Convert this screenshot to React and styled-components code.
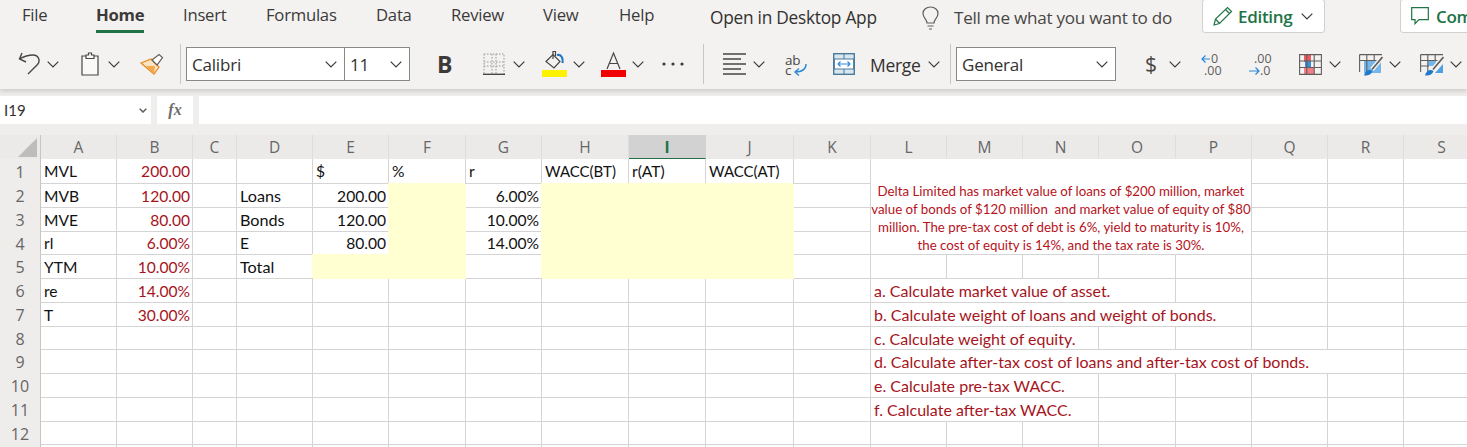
import React from 'react';
import styled, { createGlobalStyle } from 'styled-components';

const Global = createGlobalStyle`
  html, body { margin: 0; padding: 0; background: #fff; }
  #root { width: 1467px; height: 447px; overflow: hidden; }
`;
const UI = `"Open Sans", "Noto Sans", sans-serif`;
const SHEET = `Lato, "Open Sans", sans-serif`;

const Page = styled.div`
  width: 1467px; height: 447px; overflow: hidden; background: #efeeed;
  display: flex; flex-direction: column; font-family: ${UI};
`;
const Ribbon = styled.header`
  height: 89px; flex: none; background: #f3f2f1; position: relative; z-index: 1;
  box-shadow: 0 2px 5px rgba(0,0,0,.16);
`;
const TabRow = styled.nav`
  height: 44px; display: flex; align-items: flex-start; padding-left: 22px; white-space: nowrap;
`;
const Tab = styled.div`
  width: ${p => p.$w}px; margin-right: ${p => p.$gap ?? 40}px; height: 33px; box-sizing: border-box; flex: none;
  padding-top: 2px; font-size: 16.7px; line-height: 26px; letter-spacing: -.25px;
  color: #3b3a39; font-weight: ${p => p.$active ? 700 : 400};
  border-bottom: 3px solid ${p => p.$active ? '#217346' : 'transparent'};
`;
const WideLabel = styled.div`
  margin-left: ${p => p.$ml}px; width: ${p => p.$w}px; padding-top: 5px; flex: none;
  font-size: 17.3px; line-height: 26px; letter-spacing: -.25px; color: #323130;
`;
const HelpLabel = styled(WideLabel)`color: #484644; font-size: 17.1px;`;
const PillButton = styled.div`
  margin-left: ${p => p.$ml}px; margin-top: -1px; height: 34px; width: ${p => p.$w}px; flex: none;
  box-sizing: border-box; background: #fff; border: 1px solid #d2d0ce; border-radius: 3px;
  display: flex; align-items: center; gap: ${p => p.$gap}px; padding-left: 10px;
  color: #217346; font-weight: 600; font-size: 17px; letter-spacing: -.3px;
  svg { flex: none; }
`;
const BulbSlot = styled.div`margin-left: ${p => p.$ml}px; padding-top: 6px; height: 24px; flex: none;`;
const Tools = styled.div`
  height: 40px; display: flex; align-items: center;
`;
const Slot = styled.div`
  margin-left: ${p => p.$ml}px; width: ${p => p.$w}px; flex: none;
  display: flex; align-items: center; justify-content: center; height: 28px;
`;
const Divider = styled.div`
  margin-left: ${p => p.$ml}px; width: 1px; height: 40px; background: #c8c6c4; flex: none;
`;
const Combo = styled.div`
  margin-left: ${p => p.$ml}px; width: ${p => p.$w}px; height: 34px; box-sizing: border-box; flex: none;
  background: #fff; border: 1px solid #8a8886; ${p => p.$joined ? 'border-left: 0;' : ''}
  display: flex; align-items: center; justify-content: space-between;
  padding: 0 7px 0 ${p => p.$pad}px; font-size: 17px; color: #323130; letter-spacing: -.2px;
`;
const MergeText = styled.div`
  margin-left: 15px; width: 50px; flex: none; font-size: 17.5px; color: #323130; letter-spacing: -.3px; padding-top: 2px;
`;
const BoldMark = styled.div`
  margin-left: 27px; width: 15px; flex: none; font-size: 23px; font-weight: 700; color: #3b3a39; line-height: 28px; text-align: center;
`;
const Dollar = styled.div`
  margin-left: 29px; width: 11px; flex: none; font-size: 21px; color: #484644; line-height: 28px; text-align: center;
`;
const FormulaBand = styled.div`
  height: 46px; flex: none; box-sizing: border-box; padding-top: 7px; display: flex; align-items: flex-start;
`;
const NameBox = styled.div`
  width: 151px; height: 28px; background: #fff; display: flex; align-items: center; justify-content: space-between;
  padding: 0 4px; box-sizing: border-box; font-family: ${SHEET}; font-size: 15px; color: #323130;
`;
const FxBox = styled.div`
  margin-left: 6px; width: 36px; height: 28px; background: #fff; display: flex; align-items: center; justify-content: center;
  font-family: "Liberation Serif", serif; font-style: italic; font-weight: 700; color: #6e6d6b; font-size: 16px;
`;
const FormulaInput = styled.div`margin-left: 6px; flex: 1; height: 28px; background: #fff;`;

const Sheet = styled.section`
  display: grid; flex: none; width: 1480px;
  grid-template-columns: 41px 76px 76px 44px 76px 76px 77px 76px 87px 77px 88px 77px 76px 76px 76px 77px 76px 76px 76px 76px;
  grid-template-rows: 24px 25px 24px 24px 23px 24px 24px 24px 23px 24px 24px 24px 23px 24px;
  font-family: ${SHEET}; background: #fff;
`;
const Corner = styled.div`
  background: #ebeae9; border-right: 1px solid #c6c6c6; box-sizing: border-box; display: flex; align-items: center; justify-content: flex-end; padding-right: 3px;
`;
const ColHead = styled.div`
  box-sizing: border-box; background: ${p => p.$active ? '#d2d2d2' : '#ebeae9'};
  border-right: 1px solid ${p => p.$active ? '#d2d2d2' : '#dedddc'};
  border-bottom: 1px solid ${p => p.$active ? '#217346' : '#ebeae9'};
  box-shadow: ${p => p.$active ? '0 1px 0 #217346' : 'none'};
  display: flex; align-items: center; justify-content: center;
  font-family: ${UI}; font-size: 15.5px; color: ${p => p.$active ? '#217346' : '#666'}; font-weight: ${p => p.$active ? 700 : 400};
`;
const RowHead = styled.div`
  box-sizing: border-box; background: #eeedec; border-right: 1px solid #c6c6c6;
  display: flex; align-items: center; justify-content: center;
  font-family: ${UI}; font-size: 16px; color: #666;
`;
const Cell = styled.div`
  box-sizing: border-box; grid-column: span ${p => p.$span || 1};
  border-right: 1px solid ${p => p.$fill || '#d4d4d4'}; border-bottom: 1px solid ${p => p.$fill || '#d4d4d4'};
  background: ${p => p.$fill || '#fff'};
  box-shadow: ${p => p.$fill ? `-1px -1px 0 ${p.$fill}` : 'none'};
  display: flex; align-items: center; justify-content: ${p => p.$right ? 'flex-end' : 'flex-start'};
  padding: 0 2px 0 3px; font-size: ${p => p.$size || 15.6}px; color: ${p => p.$red ? '#a6141c' : '#111'}; white-space: nowrap;
`;
const Note = styled.div`
  box-sizing: border-box; grid-column: span 5; grid-row: span 4;
  border-right: 1px solid #d4d4d4; border-bottom: 1px solid #d4d4d4; background: #fff;
  display: flex; align-items: flex-end; justify-content: center; text-align: center;
  color: #b5121b; font-size: 13.3px; line-height: 18px; white-space: pre;
`;

const Chev = () => (
  <svg width="12" height="7" viewBox="0 0 12 7"><path d="M.7.7 6 6 11.3.7" fill="none" stroke="#3b3a39" strokeWidth="1.2" /></svg>
);
const ChevSlot = ({ ml }) => <Slot $ml={ml} $w={12}><Chev /></Slot>;
const S = ({ w, h, children }) => <svg width={w} height={h} viewBox={`0 0 ${w} ${h}`} fill="none">{children}</svg>;

const Undo = () => (
  <S w={22} h={24}><path d="M10 22 19.500 12.500C22.500 9 21 3 15 3 11 3 5 5 1.500 7M4 1 1.500 7 8 10" stroke="#484644" strokeWidth="1.4" /></S>
);
const Clip = () => (
  <S w={18} h={24}><path d="M5 4H1v19h16V4h-4" fill="#faf9f8" stroke="#484644" strokeWidth="1.2" /><path d="M5 6.500V3h2.500V1h3v2H13v3.500z" fill="#faf9f8" stroke="#484644" strokeWidth="1.2" /></S>
);
const Painter = () => (
  <S w={24} h={22}>
    <path d="M1 10 11 6 19 14 14 21z" fill="#fbe3c2" stroke="#e8871e" strokeWidth="1.2" />
    <path d="M6 13 15 13 14 21z" fill="#f3a94f" />
    <path d="M12 7 19 1.500 22.500 4.500 17 12z" fill="#fff" stroke="#605e5c" strokeWidth="1.2" />
  </S>
);
const BordersIcon = () => (
  <S w={22} h={22}>
    <path d="M1 1h20v20M1 1v20M9 1v20M13 1v20M1 9h20M1 13h20" stroke="#9a9896" strokeWidth="1" strokeDasharray="1.5 1.5" />
    <path d="M0 21.300h22" stroke="#484644" strokeWidth="1.4" />
  </S>
);
const FillIcon = () => (
  <S w={25} h={28}>
    <path d="M4 11.500 11 4.500 18 11.500 12 18z" stroke="#484644" strokeWidth="1.2" />
    <path d="M11 9V1.500h2.500V6" stroke="#484644" strokeWidth="1.2" />
    <path d="M15 5C19 4 21.500 8 20.500 13" stroke="#1f78c8" strokeWidth="2.200" />
    <rect x="0" y="20" width="25" height="7" fill="#fff200" />
  </S>
);
const FontColor = () => (
  <S w={25} h={28}>
    <path d="M6 19 12.500 3 19 19M8.500 13.500h8" stroke="#484644" strokeWidth="1.2" />
    <rect x="0" y="20" width="25" height="7" fill="#f00000" />
  </S>
);
const Dots = () => (
  <S w={22} h={4}><circle cx="2" cy="2" r="1.6" fill="#3b3a39" /><circle cx="11" cy="2" r="1.6" fill="#3b3a39" /><circle cx="20" cy="2" r="1.6" fill="#3b3a39" /></S>
);
const Align = () => (
  <S w={23} h={22}><path d="M0 1h23M0 6h18M0 11h23M0 16h18M0 21h23" stroke="#484644" strokeWidth="1.3" /></S>
);
const Wrap = () => (
  <svg width="22" height="24" viewBox="0 0 22 24" fill="none">
    <text x="0" y="12.500" fontFamily="Open Sans" fontSize="13.500" letterSpacing="-.3" fill="#484644">ab</text>
    <text x="0" y="22.500" fontFamily="Open Sans" fontSize="13.500" fill="#484644">c</text>
    <path d="M21 12C21 18 17 20 10 20M14 16.500 10 20 14 23.500" stroke="#2b88d8" strokeWidth="1.4" />
  </svg>
);
const MergeIcon = () => (
  <S w={22} h={22}>
    <rect x=".7" y=".7" width="20.600" height="20.600" fill="#dbe7f0" stroke="#4a7a9c" strokeWidth="1.4" />
    <rect x="1.400" y="6" width="19.200" height="10" fill="#fff" stroke="#4a7a9c" strokeWidth="1" />
    <path d="M11 1v5M11 16v5" stroke="#4a7a9c" />
    <path d="M5 11h12M7.500 8.500 5 11l2.500 2.500M14.500 8.500 17 11l-2.500 2.500" stroke="#2b88d8" strokeWidth="1.1" />
  </S>
);
const Deci = ({ more }) => (
  <svg width="24" height="24" viewBox="0 0 24 24" fill="none">
    {more ? <>
      <path d="M9 7H1M4.500 3.500 1 7l3.500 3.500" stroke="#2b88d8" strokeWidth="1.2" />
      <text x="10" y="11" fontFamily="Open Sans" fontSize="12.500" fill="#605e5c">0</text>
      <text x="3" y="23" fontFamily="Open Sans" fontSize="12.500" fill="#605e5c">.00</text>
    </> : <>
      <text x="5" y="11" fontFamily="Open Sans" fontSize="12.500" fill="#605e5c">.00</text>
      <path d="M0 19h10M6.500 15.500 10 19l-3.500 3.500" stroke="#2b88d8" strokeWidth="1.2" />
      <text x="11" y="23" fontFamily="Open Sans" fontSize="12.500" fill="#605e5c">.0</text>
    </>}
  </svg>
);
const CondFormat = () => (
  <S w={23} h={21}>
    <rect x="5" y="0" width="7" height="8" fill="#ee5a62" />
    <rect x="6" y="7" width="6" height="6.500" fill="#3b8fd6" />
    <rect x="5" y="13.500" width="10" height="7" fill="#f47e85" />
    <path d="M.6.6h21.800v19.800H.6zM.6 7h21.800M.6 13.500h21.800M7.800.6v19.800M15.200.6v19.800" stroke="#605e5c" strokeWidth="1.100" />
  </S>
);
const Brush = ({ x }) => (
  <g transform={`translate(${x} 0)`}>
    <path d="M18 5.500 8 17.500" stroke="#f3f2f1" strokeWidth="4.500" />
    <path d="M18.500 5 8 17.500" stroke="#605e5c" strokeWidth="1.700" />
    <path d="M0 23.500C1 18.500 5.500 16.500 8.500 19 7.500 22.500 4 24 0 23.500z" fill="#1f78c8" />
  </g>
);
const TableStyle = () => (
  <S w={24} h={24}>
    <rect x="5" y="8" width="17" height="13" fill="#74b6ec" />
    <path d="M.6 2.600H23M.6 2.600V20M.6 8.500H23M7.800 2.600V20M15.200 2.600V9" stroke="#605e5c" strokeWidth="1.100" />
    <Brush x={5} />
  </S>
);
const CellStyle = () => (
  <S w={24} h={24}>
    <rect x="8" y="8" width="8" height="6" fill="#74b6ec" />
    <path d="M23 21V12L15 21z" fill="#4e9fe3" />
    <path d="M.6 2.600H23M.6 2.600V20M.6 8.500H23M.6 14H9M7.800 2.600V20M15.200 2.600V9" stroke="#605e5c" strokeWidth="1.100" />
    <Brush x={5} />
  </S>
);
const Bulb = () => (
  <S w={17} h={24}><path d="M5 17C5 13 1 12 1 7.500 1 3.500 4.500 1 8.500 1S16 3.500 16 7.500C16 12 12 13 12 17zM5.500 20h6M7 23h3" stroke="#605e5c" strokeWidth="1.200" /></S>
);
const Pencil = () => (
  <S w={20} h={20}><path d="M1 19 2.500 13 14.500 1.500 18.500 5.500 6.500 17.500zM2.500 13 6.500 17.500M12.500 3.500 16.500 7.500" stroke="#217346" strokeWidth="1.200" /></S>
);
const Bubble = () => (
  <S w={18} h={18}><path d="M.7.7h16.600v12H8l-4 4v-4H.7z" stroke="#217346" strokeWidth="1.200" /></S>
);
const Triangle = () => (
  <svg width="19" height="19" viewBox="0 0 19 19"><path d="M19 0v19H0z" fill="#bdbdbd" /></svg>
);

const COLS = 'ABCDEFGHIJKLMNOPQRS'.split('');
const cells = {
  A1: { t: 'MVL' }, A2: { t: 'MVB' }, A3: { t: 'MVE' }, A4: { t: 'rl' }, A5: { t: 'YTM' }, A6: { t: 're' }, A7: { t: 'T' },
  B1: { t: '200.00', r: 1, red: 1 }, B2: { t: '120.00', r: 1, red: 1 }, B3: { t: '80.00', r: 1, red: 1 }, B4: { t: '6.00%', r: 1, red: 1 },
  B5: { t: '10.00%', r: 1, red: 1 }, B6: { t: '14.00%', r: 1, red: 1 }, B7: { t: '30.00%', r: 1, red: 1 },
  D2: { t: 'Loans', size: 16.2 }, D3: { t: 'Bonds', size: 16.2 }, D4: { t: 'E' }, D5: { t: 'Total', size: 16.2 },
  E1: { t: '$' }, E2: { t: '200.00', r: 1 }, E3: { t: '120.00', r: 1 }, E4: { t: '80.00', r: 1 },
  F1: { t: '%' }, G1: { t: 'r' }, G2: { t: '6.00%', r: 1 }, G3: { t: '10.00%', r: 1 }, G4: { t: '14.00%', r: 1 },
  H1: { t: 'WACC(BT)', size: 15 }, I1: { t: 'r(AT)' }, J1: { t: 'WACC(AT)', size: 15 },
  L6: { t: 'a. Calculate market value of asset.', span: 4, red: 1, size: 16 },
  L7: { t: 'b. Calculate weight of loans and weight of bonds.', span: 5, red: 1, size: 16 },
  L8: { t: 'c. Calculate weight of equity.', span: 3, red: 1, size: 16 },
  L9: { t: 'd. Calculate after-tax cost of loans and after-tax cost of bonds.', span: 7, red: 1, size: 16 },
  L10: { t: 'e. Calculate pre-tax WACC.', span: 3, red: 1, size: 16 },
  L11: { t: 'f. Calculate after-tax WACC.', span: 3, red: 1, size: 16 },
};
const YELLOW = '#ffffd1';
const yellow = new Set(['E5', 'F2', 'F3', 'F4', 'F5', 'H2', 'H3', 'H4', 'H5', 'I2', 'I3', 'I4', 'I5', 'J2', 'J3', 'J4', 'J5']);
const NOTE = 'Delta Limited has market value of loans of $200 million, market\nvalue of bonds of $120 million  and market value of equity of $80\nmillion. The pre-tax cost of debt is 6%, yield to maturity is 10%,\nthe cost of equity is 14%, and the tax rate is 30%.';

function rowCells(r) {
  const out = [<RowHead key={`h${r}`}>{r}</RowHead>];
  let skip = 0;
  COLS.forEach((c, i) => {
    if (skip > 0) { skip--; return; }
    const id = c + r;
    if (r === 1 && c === 'L') { out.push(<Note key={id}>{NOTE}</Note>); skip = 4; return; }
    if (r >= 2 && r <= 4 && i >= 11 && i <= 15) return;
    const d = cells[id] || {};
    if (d.span) skip = d.span - 1;
    out.push(<Cell key={id} $span={d.span} $right={d.r} $red={d.red} $size={d.size} $fill={yellow.has(id) ? YELLOW : undefined}>{d.t}</Cell>);
  });
  return out;
}

export default function App() {
  return (
    <Page>
      <Global />
      <Ribbon>
        <TabRow>
          <Tab $w={26} $gap={48}>File</Tab>
          <Tab $w={48} $active $gap={39}>Home</Tab>
          <Tab $w={43}>Insert</Tab>
          <Tab $w={70}>Formulas</Tab>
          <Tab $w={35}>Data</Tab>
          <Tab $w={52}>Review</Tab>
          <Tab $w={37} $gap={39}>View</Tab>
          <Tab $w={36} $gap={0}>Help</Tab>
          <WideLabel $ml={55} $w={167}>Open in Desktop App</WideLabel>
          <BulbSlot $ml={45}><Bulb /></BulbSlot>
          <HelpLabel $ml={15} $w={218}>Tell me what you want to do</HelpLabel>
          <PillButton $ml={30} $w={123} $gap={5}><Pencil />Editing<Slot $ml={4} $w={12}><Chev /></Slot></PillButton>
          <PillButton $ml={75} $w={130} $gap={7}><Bubble />Comments</PillButton>
        </TabRow>
        <Tools>
          <Slot $ml={18} $w={22}><Undo /></Slot>
          <ChevSlot ml={7} />
          <Slot $ml={22} $w={18}><Clip /></Slot>
          <ChevSlot ml={9} />
          <Slot $ml={20} $w={24}><Painter /></Slot>
          <Divider $ml={16} />
          <Combo $ml={5} $w={159} $pad={5}>Calibri <Chev /></Combo>
          <Combo $w={65} $pad={5} $ml={0} $joined>11 <Chev /></Combo>
          <BoldMark>B</BoldMark>
          <Slot $ml={31} $w={22}><BordersIcon /></Slot>
          <ChevSlot ml={8} />
          <Slot $ml={17} $w={25}><FillIcon /></Slot>
          <ChevSlot ml={6} />
          <Slot $ml={16} $w={25}><FontColor /></Slot>
          <ChevSlot ml={6} />
          <Slot $ml={18} $w={22}><Dots /></Slot>
          <Divider $ml={19} />
          <Slot $ml={19} $w={23}><Align /></Slot>
          <ChevSlot ml={7} />
          <Slot $ml={20} $w={22}><Wrap /></Slot>
          <Slot $ml={26} $w={22}><MergeIcon /></Slot>
          <MergeText>Merge</MergeText>
          <ChevSlot ml={8} />
          <Divider $ml={10} />
          <Combo $ml={5} $w={160} $pad={5}>General <Chev /></Combo>
          <Dollar>$</Dollar>
          <ChevSlot ml={13} />
          <Slot $ml={20} $w={24}><Deci more /></Slot>
          <Slot $ml={24} $w={24}><Deci /></Slot>
          <Slot $ml={26} $w={23}><CondFormat /></Slot>
          <ChevSlot ml={7} />
          <Slot $ml={18} $w={24}><TableStyle /></Slot>
          <ChevSlot ml={6} />
          <Slot $ml={19} $w={24}><CellStyle /></Slot>
          <ChevSlot ml={6} />
        </Tools>
      </Ribbon>
      <FormulaBand>
        <NameBox>I19 <svg width="8" height="5" viewBox="0 0 8 5"><path d="M.7.7 4 4 7.300.7" fill="none" stroke="#605e5c" strokeWidth="1.500" /></svg></NameBox>
        <FxBox>fx</FxBox>
        <FormulaInput />
      </FormulaBand>
      <Sheet>
        <Corner><Triangle /></Corner>
        {COLS.map(c => <ColHead key={c} $active={c === 'I'}>{c}</ColHead>)}
        {Array.from({ length: 13 }, (_, i) => rowCells(i + 1))}
      </Sheet>
    </Page>
  );
}
